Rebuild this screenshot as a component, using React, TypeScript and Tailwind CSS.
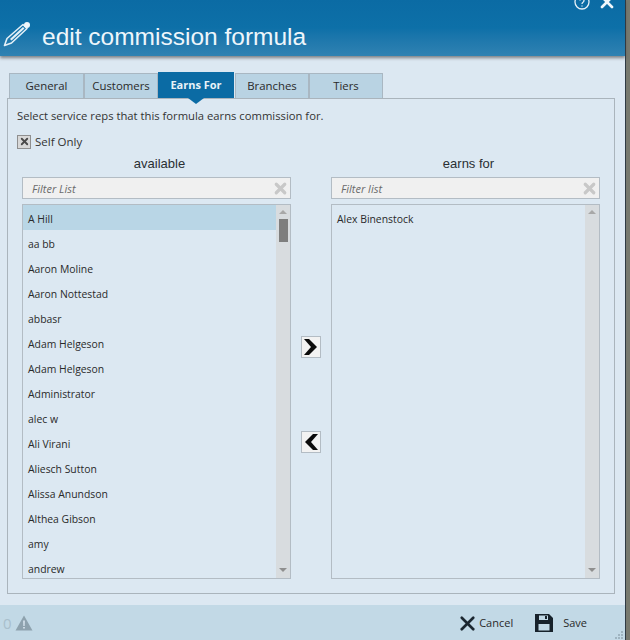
import { X } from "lucide-react";

const tabs = [
  { label: "General", width: "w-[75px]" },
  { label: "Customers", width: "w-[74px]" },
  { label: "Earns For", width: "w-[77px]" },
  { label: "Branches", width: "w-[74px]" },
  { label: "Tiers", width: "w-[74px]" },
];

const names = [
  "A Hill",
  "aa bb",
  "Aaron Moline",
  "Aaron Nottestad",
  "abbasr",
  "Adam Helgeson",
  "Adam Helgeson",
  "Administrator",
  "alec w",
  "Ali Virani",
  "Aliesch Sutton",
  "Alissa Anundson",
  "Althea Gibson",
  "amy",
  "andrew",
];

function Pencil() {
  return (
    <svg width="28" height="26" viewBox="0 0 28 26" className="shrink-0">
      <path d="M1.5 24.5 L4 17.5 L20 3.5 L24 7.5 L8.5 22 Z" fill="none" stroke="#e4f0f7" strokeWidth="1.6" strokeLinejoin="round" />
      <path d="M7 18 L20 6 L21.5 7.5 L8.5 19.5 Z" fill="#e4f0f7" />
      <circle cx="24" cy="4" r="3" fill="#f0f7fb" />
    </svg>
  );
}

function FilterBox({ placeholder }: { placeholder: string }) {
  return (
    <div className="flex h-[22px] items-center justify-between border border-[#b3bcc4] bg-[#f0f0f0] pl-[9px] pr-[1px]">
      <span className="pt-[2px] text-[11px] italic text-[#6b6b6b]">{placeholder}</span>
      <X size={17} strokeWidth={4.5} className="text-[#c8c8c8]" />
    </div>
  );
}

function Scrollbar({ thumb }: { thumb?: boolean }) {
  return (
    <div className="flex w-[14px] shrink-0 flex-col items-center justify-between bg-[#d8dcdf] pb-[6px] pt-[5px]">
      <div className="flex flex-col items-center">
        <div className="h-0 w-0 border-x-[4px] border-b-[4px] border-x-transparent border-b-[#a8a8a8]" />
        {thumb && <div className="mt-[5px] h-[23px] w-[9px] bg-[#7e7e7e]" />}
      </div>
      <div className="h-0 w-0 border-x-[4px] border-t-[4px] border-x-transparent border-t-[#8f8f8f]" />
    </div>
  );
}

function ListBox({ items, selected, thumb }: { items: string[]; selected?: number; thumb?: boolean }) {
  return (
    <div className="mt-[5px] flex h-[375px] border border-[#b3bcc4]">
      <div className="flex-1 overflow-hidden">
        {items.map((name, i) => (
          <div
            key={i}
            className={`flex h-[25px] items-center pl-[5px] pt-[5px] text-[10.4px] text-[#2a2a2a] ${i === selected ? "bg-[#b9d6e6]" : ""}`}
          >
            {name}
          </div>
        ))}
      </div>
      <Scrollbar thumb={thumb} />
    </div>
  );
}

function MoveButton({ left }: { left?: boolean }) {
  return (
    <div className="flex h-[22px] w-[20px] items-center justify-center border border-[#b3bcc4] bg-[#f2f2f2]">
      <svg width="16" height="18" viewBox="0 0 16 18">
        <path d={left ? "M10 1 H15 L8 9 L15 17 H10 L2 9 Z" : "M6 1 H1 L8 9 L1 17 H6 L14 9 Z"} fill="#0a0a0a" />
      </svg>
    </div>
  );
}

export default function App() {
  return (
    <div className="flex h-[640px] w-[630px] overflow-hidden bg-[#77796f] font-['Open_Sans',sans-serif]">
      <div className="flex w-[625px] shrink-0 flex-col bg-[#dce8f2]">
        {/* Header */}
        <div className="relative flex h-[56px] shrink-0 items-end bg-gradient-to-b from-[#0b6ba4] via-[#0d70a8] to-[#2f82b2] pb-[1px] pl-[3px] shadow-[0_2px_3px_rgba(60,60,60,0.6)]">
          <div className="mb-[8px]">
            <Pencil />
          </div>
          <span className="ml-[11px] font-['Liberation_Sans',sans-serif] text-[24.5px] leading-[36px] text-[#eef6fb]">
            edit commission formula
          </span>
          <svg width="16" height="16" viewBox="0 0 16 16" className="absolute right-[35px] top-[-6px]">
            <circle cx="8" cy="8" r="7" fill="none" stroke="#e6f1f8" strokeWidth="1.3" />
            <path d="M6 6.5 a2 2 0 1 1 3 1.8 c-.8 .5 -1 1 -1 1.7 M8 11.5 v1" fill="none" stroke="#e6f1f8" strokeWidth="1.3" />
          </svg>
          <X size={20} strokeWidth={3.2} className="absolute right-[8px] top-[-8px] text-[#f0f7fb]" />
        </div>

        {/* Tabs and panel */}
        <div className="flex-1 px-[7px] pb-[11px] pt-[16px]">
          <div className="flex h-[26px] items-end pl-[2px]">
            {tabs.map((tab) =>
              tab.label === "Earns For" ? (
                <div key={tab.label} className={`relative flex h-[26px] ${tab.width} items-center justify-center border-r border-[#dce8f2] bg-[#0b6ba4] text-[11px] font-bold text-[#e8f2f8]`}>
                  {tab.label}
                  <div className="absolute left-[30px] top-[26px] h-0 w-0 border-x-[8px] border-t-[6px] border-x-transparent border-t-[#0b6ba4]" />
                </div>
              ) : (
                <div key={tab.label} className={`flex h-[25px] ${tab.width} items-center justify-center border border-b-0 border-[#a9b7c2] bg-[#b9d3e3] text-[11.4px] text-[#2a2a2a]`}>
                  {tab.label}
                </div>
              ),
            )}
          </div>
          <div className="flex h-[496px] w-[608px] flex-col border border-[#aab4bc] bg-[#dce8f2] pl-[9px] pr-[13px] pt-[8px]">
            <p className="text-[11.25px] leading-[17px] text-[#333]">
              Select service reps that this formula earns commission for.
            </p>
            <div className="mt-[9px] flex items-center gap-[4px]">
              <div className="flex h-[14px] w-[14px] items-center justify-center border border-[#8f8f8f] bg-[#d8d8d8]">
                <X size={11} strokeWidth={4} className="text-[#4a4a4a]" />
              </div>
              <span className="text-[11.5px] leading-[17px] text-[#333]">Self Only</span>
            </div>
            <div className="mt-[6px] flex pl-[5px]">
              <div className="w-[269px]">
                <div className="h-[15px] pl-[6px] text-center font-['Liberation_Sans',sans-serif] text-[13px] leading-[15px] text-[#2a2f33]">available</div>
                <div className="mt-[6px]">
                  <FilterBox placeholder="Filter List" />
                </div>
                <ListBox items={names} selected={0} thumb />
              </div>
              <div className="flex w-[40px] flex-col items-center pt-[180px]">
                <MoveButton />
                <div className="mt-[73px]">
                  <MoveButton left />
                </div>
              </div>
              <div className="w-[269px]">
                <div className="h-[15px] pl-[6px] text-center font-['Liberation_Sans',sans-serif] text-[13px] leading-[15px] text-[#2a2f33]">earns for</div>
                <div className="mt-[6px]">
                  <FilterBox placeholder="Filter list" />
                </div>
                <ListBox items={["Alex Binenstock"]} />
              </div>
            </div>
          </div>
        </div>

        {/* Footer */}
        <div className="relative flex h-[36px] shrink-0 items-center bg-[#c2d9e6] pl-[3px] pr-[38px]">
          <span className="text-[15px] text-[#a9bfcc]">0</span>
          <svg width="18" height="16" viewBox="0 0 18 16" className="ml-[3px]">
            <path d="M9 0.5 L17.5 15.5 H0.5 Z" fill="#8ea2ae" />
            <path d="M8.2 5.5 h1.6 l-.2 5.5 h-1.2 Z M8.2 12 h1.6 v1.6 h-1.6 Z" fill="#dce8f2" />
          </svg>
          <div className="ml-auto flex items-center">
            <X size={23} strokeWidth={2.8} className="text-[#1c2730]" />
            <span className="text-[11px] text-[#2a2a2a]">Cancel</span>
            <svg width="18" height="18" viewBox="0 0 18 18" className="ml-[22px]">
              <path fill="#17222b" fillRule="evenodd" d="M0 0 H14 L18 4 V18 H0 Z M4 1.5 V6 H13 V1.5 Z M10 2 h2 v3 h-2 Z M3.5 10 V16.5 H14.5 V10 Z" />
            </svg>
            <span className="ml-[10px] text-[11px] text-[#2a2a2a]">Save</span>
          </div>
          {/* resize grip */}
          <svg width="9" height="9" viewBox="0 0 9 9" className="absolute bottom-[1px] right-[1px]">
            <path d="M6 0 h2 v2 h-2 Z M3 3 h2 v2 h-2 Z M6 3 h2 v2 h-2 Z M0 6 h2 v2 h-2 Z M3 6 h2 v2 h-2 Z M6 6 h2 v2 h-2 Z" fill="#9fb4c0" />
          </svg>
        </div>
      </div>
      <div className="w-[1px] shrink-0 bg-[#2f3a44]" />
    </div>
  );
}
